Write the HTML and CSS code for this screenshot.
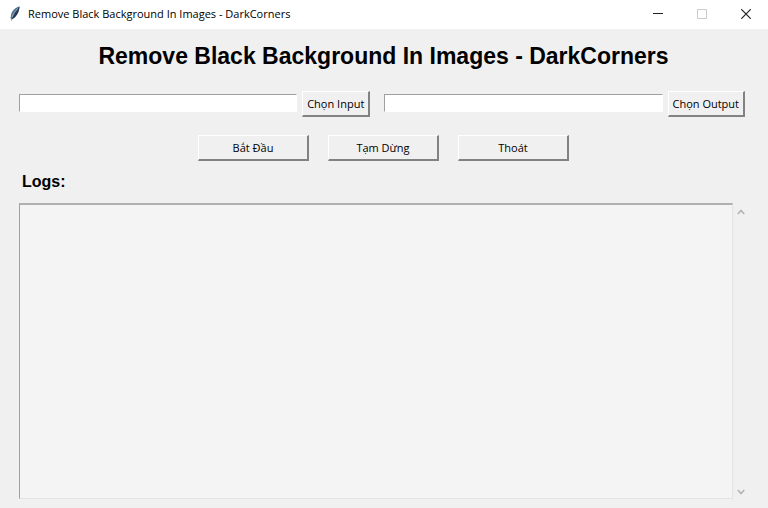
FILE: index.html
```html
<!DOCTYPE html>
<html lang="vi">
<head>
    <meta charset="UTF-8">
    <title>Remove Black Background In Images - DarkCorners</title>
    <link rel="stylesheet" href="styles.css">
</head>
<body>
    <div class="window">
        <header class="title-bar">
            <svg class="app-icon" width="12" height="16" viewBox="0 0 12 16">
                <path d="M10.5 0.5C7 1 3 4.500 2 9L1.500 12.500L2.500 13L2.300 15.500L3.300 13C7 11.500 10 6 10.500 0.500Z" fill="#4f6f8f"/>
                <path d="M10.500 0.500C7 5 4 9 2.300 15.500L3.300 13C7 11.500 10.500 6 10.500 0.500Z" fill="#28394b"/>
                <path d="M9 2.500C6 5 4 8 3 11" fill="none" stroke="#a9c0d4" stroke-width="0.800"/>
            </svg>
            <span class="title-text">Remove Black Background In Images - DarkCorners</span>
            <div class="window-controls">
                <button type="button" class="control" aria-label="Minimize">
                    <svg width="10" height="10" viewBox="0 0 10 10"><path d="M0 4.500H10" stroke="#222"/></svg>
                </button>
                <button type="button" class="control" aria-label="Maximize" disabled>
                    <svg width="10" height="10" viewBox="0 0 10 10"><path d="M0.500 0.500H9.500V9.500H0.500Z" fill="none" stroke="#ccc"/></svg>
                </button>
                <button type="button" class="control" aria-label="Close">
                    <svg width="10" height="10" viewBox="0 0 10 10"><path d="M0.300 0.300L9.700 9.700M9.700 0.300L0.300 9.700" stroke="#222" stroke-width="1.200"/></svg>
                </button>
            </div>
        </header>

        <main class="content">
            <h1>Remove Black Background In Images - DarkCorners</h1>

            <div class="paths">
                <div class="path-group">
                    <input type="text" id="input-path" aria-label="Input">
                    <button type="button" class="button">Chọn Input</button>
                </div>
                <div class="path-group">
                    <input type="text" id="output-path" aria-label="Output">
                    <button type="button" class="button">Chọn Output</button>
                </div>
            </div>

            <div class="actions">
                <button type="button" class="button">Bắt Đầu</button>
                <button type="button" class="button">Tạm Dừng</button>
                <button type="button" class="button">Thoát</button>
            </div>

            <label class="logs-label" for="logs">Logs:</label>
            <div class="logs">
                <textarea id="logs" readonly></textarea>
                <div class="scrollbar">
                    <svg width="8" height="6" viewBox="0 0 8 6"><path d="M0.800 5L4 1.500L7.200 5" fill="none" stroke="#b4b4b4" stroke-width="1.600"/></svg>
                    <svg width="8" height="6" viewBox="0 0 8 6"><path d="M0.800 1L4 4.500L7.200 1" fill="none" stroke="#b4b4b4" stroke-width="1.600"/></svg>
                </div>
            </div>
        </main>
    </div>
</body>
</html>
```
FILE: styles.css
```css
* {
    box-sizing: border-box;
}

body {
    margin: 0;
    font-family: "Open Sans", sans-serif;
    font-size: 11px;
    color: #000;
    background-color: #f0f0f0;
}

.window {
    display: flex;
    flex-direction: column;
    height: 100vh;
}

/* Title bar */
.title-bar {
    display: flex;
    align-items: flex-start;
    height: 29px;
    padding-left: 9px;
    background-color: #fff;
}

.app-icon {
    margin: 6px 7px 0 0;
}

.title-text {
    flex: 1;
    line-height: 28px;
    white-space: nowrap;
}

.window-controls {
    display: flex;
}

.control {
    display: flex;
    align-items: center;
    justify-content: center;
    width: 44px;
    height: 28px;
    padding: 0;
    border: none;
    background: none;
}

/* Main area */
.content {
    flex: 1;
    display: flex;
    flex-direction: column;
    padding: 12px 20px 9px 19px;
}

h1 {
    margin: 0 0 20px;
    font-family: "Liberation Sans", Arial, sans-serif;
    font-size: 23px;
    line-height: 30px;
    text-align: center;
}

.paths {
    display: flex;
    gap: 14px;
    padding-right: 3px;
}

.path-group {
    display: flex;
    flex: 1 1 auto;
    align-items: center;
    gap: 5px;
}

.path-group input {
    flex: 1;
    min-width: 0;
    height: 18px;
    margin-bottom: 2px;
    padding: 1px 2px;
    border: 1px solid #fff;
    border-top-color: #a0a0a0;
    border-left-color: #a0a0a0;
    background-color: #fff;
}

.button {
    height: 26px;
    padding: 0 4px;
    border: 1px solid #fff;
    border-right: 2px solid #828282;
    border-bottom: 2px solid #828282;
    background-color: #f0f0f0;
    color: #000;
    font-family: inherit;
    font-size: 11px;
    white-space: nowrap;
}

.actions {
    display: flex;
    justify-content: center;
    gap: 19px;
    margin-top: 18px;
}

.actions .button {
    width: 111px;
}

.logs-label {
    margin: 11px 3px;
    font-family: "Liberation Sans", Arial, sans-serif;
    font-size: 16px;
    font-weight: bold;
    line-height: 20px;
}

.logs {
    flex: 1;
    display: flex;
}

.logs textarea {
    flex: 1;
    border: 1px solid #e3e3e3;
    border-top: 2px solid #b0b0b0;
    border-left-color: #a0a0a0;
    background-color: #f4f4f4;
    outline: none;
    resize: none;
}

.scrollbar {
    display: flex;
    flex-direction: column;
    align-items: center;
    justify-content: space-between;
    width: 15px;
    padding: 6px 0 4px;
}
```
